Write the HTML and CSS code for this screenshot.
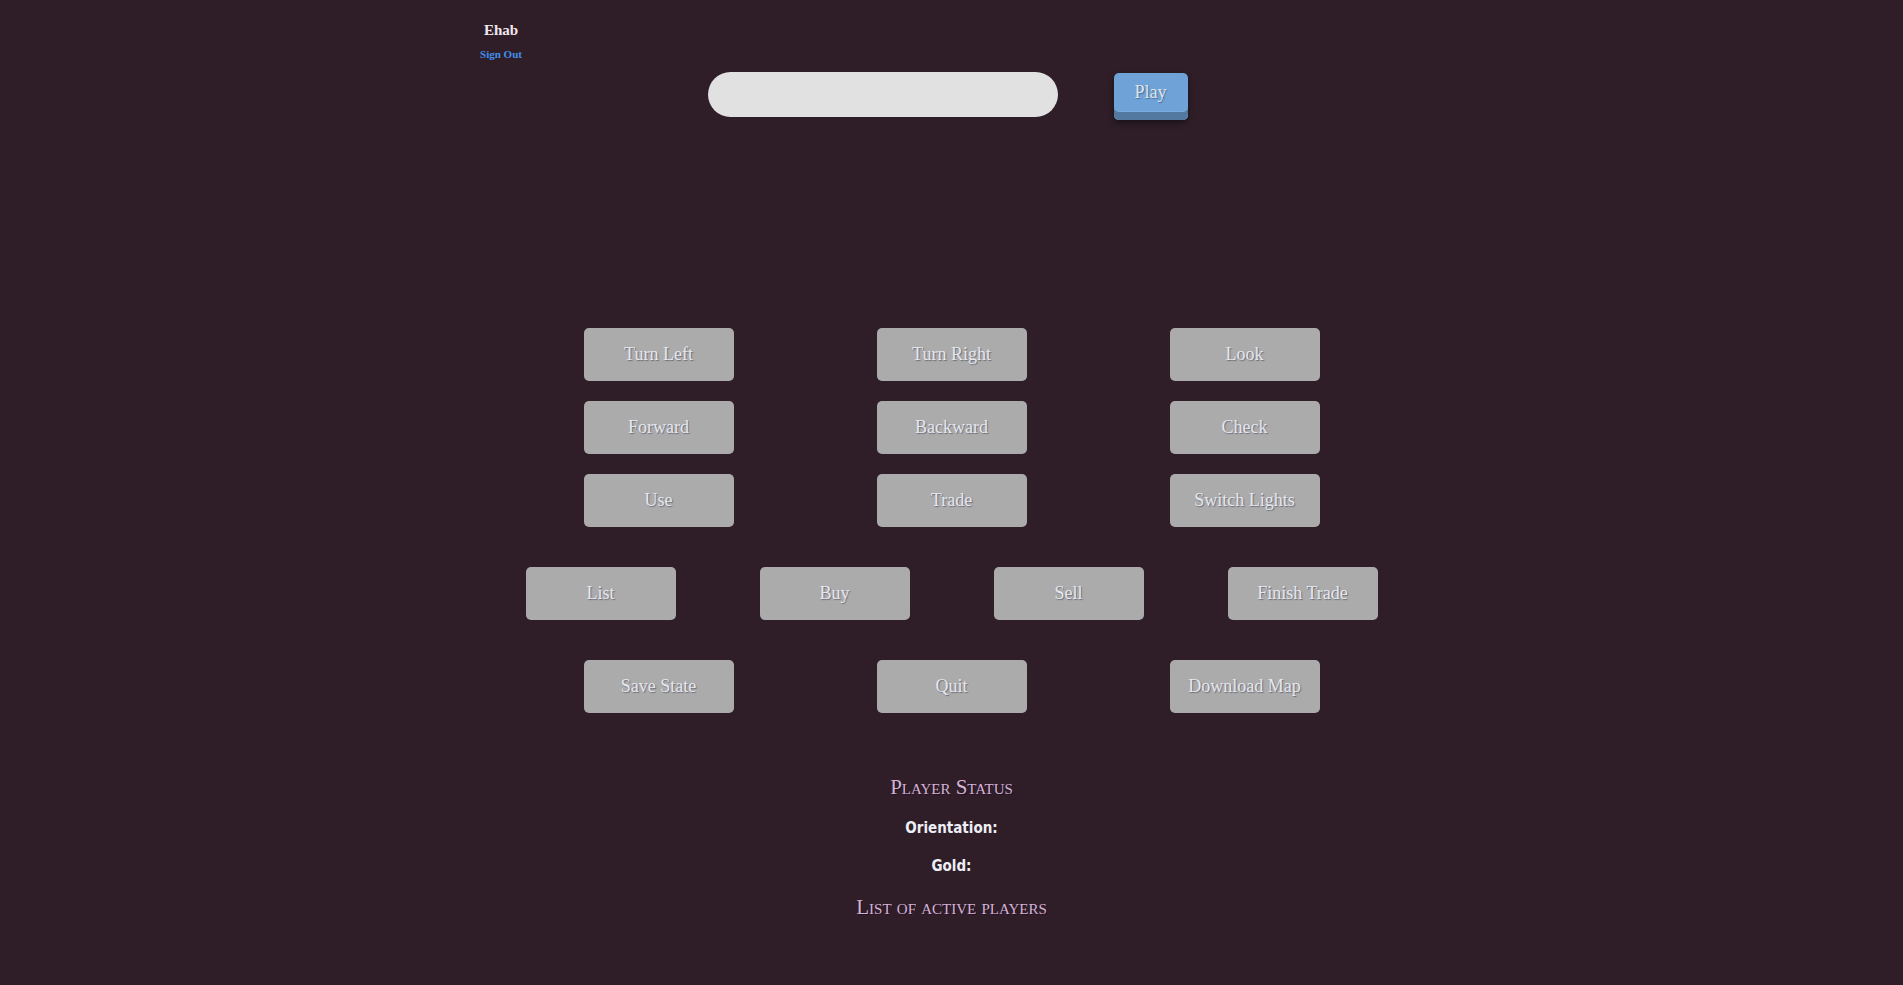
FILE: index.html
```html
<!DOCTYPE html>
<html>
<head>
<meta charset="utf-8">
<link rel="stylesheet" href="styles.css">
</head>
<body>
<div class="page">
  <header class="user">
    <div class="user-name">Ehab</div>
    <a class="sign-out" href="#">Sign Out</a>
  </header>
  <div class="play-row">
    <input class="name-input" type="text">
    <button class="play-btn">Play</button>
  </div>
  <section class="controls">
    <div class="grid3">
      <button class="btn">Turn Left</button>
      <button class="btn">Turn Right</button>
      <button class="btn">Look</button>
      <button class="btn">Forward</button>
      <button class="btn">Backward</button>
      <button class="btn">Check</button>
      <button class="btn">Use</button>
      <button class="btn">Trade</button>
      <button class="btn">Switch Lights</button>
    </div>
    <div class="grid4">
      <button class="btn">List</button>
      <button class="btn">Buy</button>
      <button class="btn">Sell</button>
      <button class="btn">Finish Trade</button>
    </div>
    <div class="grid3 last">
      <button class="btn">Save State</button>
      <button class="btn">Quit</button>
      <button class="btn">Download Map</button>
    </div>
  </section>
  <section class="status">
    <h2 class="heading">Player Status</h2>
    <div class="stat">Orientation:</div>
    <div class="stat">Gold:</div>
    <h2 class="heading players">List of active players</h2>
  </section>
</div>
</body>
</html>
```
FILE: styles.css
```css
html, body {
  margin: 0;
  padding: 0;
  background: #2f1e28;
}
body {
  font-family: "Liberation Serif", serif;
  color: #e6e6ee;
}
.page {
  width: 1903px;
  min-height: 985px;
  display: flex;
  flex-direction: column;
  align-items: center;
}
.user {
  align-self: flex-start;
  margin-left: 471px;
  width: 60px;
  padding-top: 20px;
  display: flex;
  flex-direction: column;
  align-items: center;
}
.user-name {
  font-size: 15px;
  font-weight: bold;
  color: #f0e8ee;
  line-height: 20px;
}
.sign-out {
  font-size: 11px;
  font-weight: bold;
  color: #3f8fe8;
  text-decoration: none;
  line-height: 14px;
  margin-top: 7px;
}
.play-row {
  display: flex;
  align-items: flex-start;
  gap: 56px;
  margin-top: 11px;
  margin-left: -8px;
}
.name-input {
  width: 350px;
  height: 45px;
  box-sizing: border-box;
  border: none;
  border-radius: 23px;
  background: #e1e1e1;
  outline: none;
}
.play-btn {
  width: 74px;
  height: 47px;
  margin-top: 1px;
  box-sizing: border-box;
  border: none;
  border-radius: 5px;
  background: #6fa3d8;
  box-shadow: inset 0 -8px 0 #5479a0, inset 0 -9px 0 #7aabdc, 0 3px 6px rgba(0,0,0,0.45);
  font-family: "Liberation Serif", serif;
  font-size: 18px;
  color: #dfe4ec;
  padding: 0 0 8px 0;
  text-shadow: 1px 1px 1px rgba(40,60,90,0.5);
}
.controls {
  margin-top: 208px;
  display: flex;
  flex-direction: column;
  align-items: center;
}
.grid3 {
  display: grid;
  grid-template-columns: repeat(3, 150px);
  column-gap: 143px;
  row-gap: 20px;
}
.grid4 {
  display: grid;
  grid-template-columns: repeat(4, 150px);
  column-gap: 84px;
  margin-top: 40px;
}
.grid3.last {
  margin-top: 40px;
}
.btn {
  width: 150px;
  height: 53px;
  border: none;
  border-radius: 5px;
  background: #ababab;
  font-family: "Liberation Serif", serif;
  font-size: 18px;
  color: #e3e7ef;
  text-shadow: 1px 1px 1px rgba(60,60,80,0.55);
  padding: 0;
}
.status {
  margin-top: 60px;
  display: flex;
  flex-direction: column;
  align-items: center;
}
.heading {
  margin: 0;
  font-family: "Liberation Serif", serif;
  font-variant: small-caps;
  font-weight: normal;
  font-size: 21px;
  line-height: 28px;
  color: #d6b2d2;
  text-shadow: 1px 1px 0 rgba(20,10,40,0.6);
}
.stat {
  font-family: "DejaVu Sans Condensed", "DejaVu Sans", sans-serif;
  font-weight: bold;
  font-size: 15px;
  line-height: 22px;
  color: #eeeef6;
  margin-top: 16px;
}
.heading.players {
  margin-top: 16px;
}
```
